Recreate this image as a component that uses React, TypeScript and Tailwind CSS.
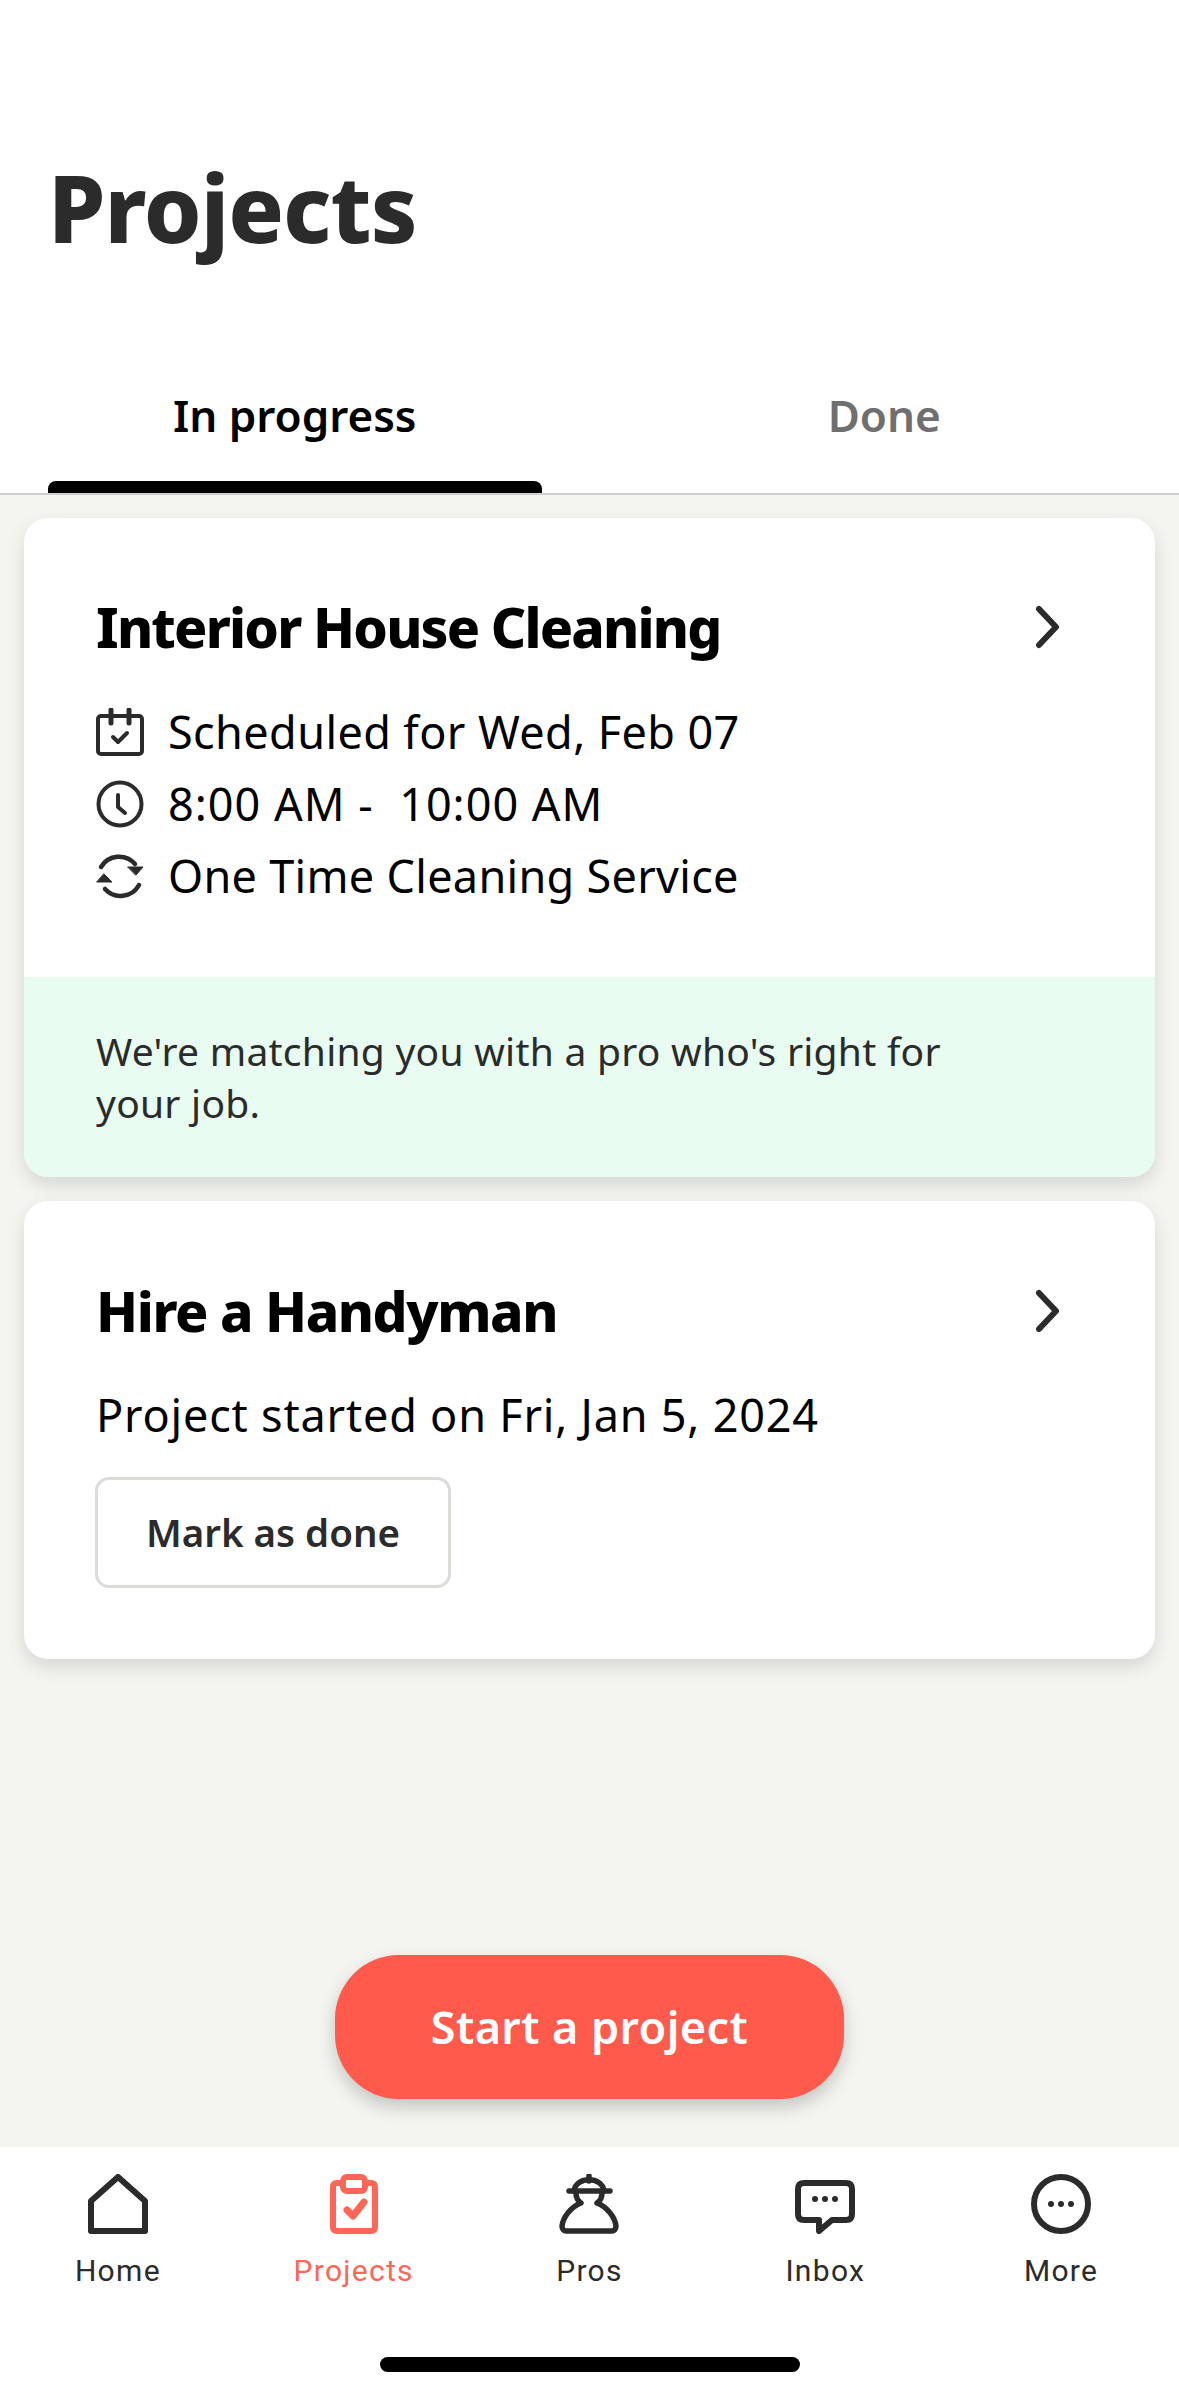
// Projects screen: tabs, project cards, start button and bottom navigation
const PLEX = "font-['Noto_Sans','Liberation_Sans',sans-serif]"

function Chevron() {
  return (
    <svg viewBox="0 0 30 44" className="h-[44px] w-[30px]" fill="none" stroke="#2b2b2b" strokeWidth="6" strokeLinecap="round" strokeLinejoin="round">
      <path d="M5 4 L22 22 L5 40" />
    </svg>
  )
}

function CalendarIcon() {
  return (
    <svg viewBox="0 0 48 48" className="h-[48px] w-[48px] shrink-0" fill="none" stroke="#2b2b2b" strokeWidth="4" strokeLinecap="round" strokeLinejoin="round">
      <rect x="2" y="8" width="44" height="38" rx="3" />
      <path d="M15 2 V15 M33 2 V15" strokeWidth="5" />
      <path d="M17 29 L22 34 L31 25" />
    </svg>
  )
}

function ClockIcon() {
  return (
    <svg viewBox="0 0 48 48" className="h-[48px] w-[48px] shrink-0" fill="none" stroke="#2b2b2b" strokeWidth="4" strokeLinecap="round" strokeLinejoin="round">
      <circle cx="24" cy="24" r="21.5" />
      <path d="M22 15 V27 L29 33" />
    </svg>
  )
}

function RepeatIcon() {
  return (
    <svg viewBox="0 0 48 48" className="h-[48px] w-[48px] shrink-0" fill="none" stroke="#2b2b2b" strokeWidth="4.5" strokeLinecap="round">
      <path d="M5 15 A21 21 0 0 1 39 12" />
      <path d="M43 33 A21 21 0 0 1 9 37" />
      <path d="M32 15 H47 L40 23 Z" fill="#2b2b2b" stroke="#2b2b2b" strokeWidth="1" strokeLinejoin="round" />
      <path d="M1 30 H16 L8 22 Z" fill="#2b2b2b" stroke="#2b2b2b" strokeWidth="1" strokeLinejoin="round" />
    </svg>
  )
}

function HomeIcon() {
  return (
    <svg viewBox="0 0 60 60" className="h-[60px] w-[60px]" fill="none" stroke="#2b2b2b" strokeWidth="6" strokeLinejoin="round">
      <path d="M30 3 L57 27 V57 H3 V27 Z" />
    </svg>
  )
}

function ProjectsIcon() {
  return (
    <svg viewBox="0 0 60 60" className="h-[60px] w-[60px]" fill="none" stroke="#ff6658" strokeWidth="6" strokeLinejoin="round" strokeLinecap="round">
      <path d="M17 9 H13 Q9 9 9 13 V53 Q9 57 13 57 H47 Q51 57 51 53 V13 Q51 9 47 9 H43" />
      <rect x="19" y="3" width="22" height="14" rx="4" />
      <path d="M23 36 L29 42 L40 28" strokeWidth="7" />
    </svg>
  )
}

function ProsIcon() {
  return (
    <svg viewBox="0 0 60 60" className="h-[60px] w-[60px]" fill="none" stroke="#2b2b2b" strokeWidth="5.5" strokeLinejoin="round" strokeLinecap="round">
      <path d="M10 17 H51" />
      <path d="M15 17 C17 2 43 2 45 17" />
      <path d="M30 2 V7" />
      <path d="M17 19 C17 24 19 27 22 29 C12 33 4 43 3 52 C3 55 5 57 7 57 H53 C55 57 57 55 57 52 C56 43 48 33 38 29 C41 27 43 24 43 19" />
    </svg>
  )
}

function InboxIcon() {
  return (
    <svg viewBox="0 0 60 60" className="h-[60px] w-[60px]" fill="none" stroke="#2b2b2b" strokeWidth="6" strokeLinejoin="round" strokeLinecap="round">
      <path d="M9 9 H51 Q57 9 57 15 V40 Q57 46 51 46 H37 L24 57 V46 H9 Q3 46 3 40 V15 Q3 9 9 9 Z" />
      <circle cx="20" cy="25" r="3" fill="#2b2b2b" stroke="none" />
      <circle cx="30" cy="25" r="3" fill="#2b2b2b" stroke="none" />
      <circle cx="40" cy="25" r="3" fill="#2b2b2b" stroke="none" />
    </svg>
  )
}

function MoreIcon() {
  return (
    <svg viewBox="0 0 60 60" className="h-[60px] w-[60px]" fill="none" stroke="#2b2b2b" strokeWidth="6">
      <circle cx="30" cy="30" r="27" />
      <circle cx="20" cy="30" r="3" fill="#2b2b2b" stroke="none" />
      <circle cx="30" cy="30" r="3" fill="#2b2b2b" stroke="none" />
      <circle cx="40" cy="30" r="3" fill="#2b2b2b" stroke="none" />
    </svg>
  )
}

const NAV_ITEMS = [
  { label: 'Home', icon: <HomeIcon /> },
  { label: 'Projects', icon: <ProjectsIcon />, active: true },
  { label: 'Pros', icon: <ProsIcon /> },
  { label: 'Inbox', icon: <InboxIcon /> },
  { label: 'More', icon: <MoreIcon /> },
]

export default function App() {
  return (
    <div className={`flex h-[2396px] w-[1179px] flex-col overflow-hidden bg-[#f4f4f1] ${PLEX}`}>
      {/* Header and tabs */}
      <header className="h-[495px] shrink-0 border-b-2 border-[#cfcfcd] bg-white">
        <h1 className="pl-[48px] pt-[148px] text-[92px] leading-[120px] font-extrabold tracking-[-1px] text-[#2b2b2b]">Projects</h1>
        <div className="mt-[117px] grid grid-cols-2">
          <div className="flex flex-col items-center px-[48px]">
            <span className="text-[44px] leading-[60px] font-semibold text-black">In progress</span>
            <div className="mt-[36px] h-[12px] w-full rounded-t-[8px] bg-black" />
          </div>
          <div className="flex flex-col items-center px-[48px]">
            <span className="text-[44px] leading-[60px] font-semibold text-[#6f6f6f]">Done</span>
          </div>
        </div>
      </header>

      {/* Project cards */}
      <main className="flex flex-1 flex-col gap-[24px] px-[24px] pt-[23px]">
        <section className="overflow-hidden rounded-[24px] bg-white shadow-[0_8px_18px_rgba(0,0,0,0.12)]">
          <div className="h-[459px] pl-[72px] pr-[91px] pt-[73px]">
            <div className="flex items-center justify-between">
              <h2 className="text-[55px] leading-[72px] font-extrabold tracking-[-1.8px] text-black">Interior House Cleaning</h2>
              <Chevron />
            </div>
            <div className="mt-[33px] flex flex-col text-[45px] leading-[72px] text-black">
              <div className="flex items-center gap-[24px] tracking-[0.4px]"><CalendarIcon />Scheduled for Wed, Feb 07</div>
              <div className="flex items-center gap-[24px] tracking-[1px]"><ClockIcon />8:00 AM -&nbsp; 10:00 AM</div>
              <div className="flex items-center gap-[24px] tracking-[0.3px]"><RepeatIcon />One Time Cleaning Service</div>
            </div>
          </div>
          <div className="h-[200px] bg-[#e8fcf1] px-[72px] pt-[48px] text-[39px] leading-[52px] tracking-[0.25px] text-[#2b2b2b]">
            <p className="w-[880px]">We're matching you with a pro who's right for your job.</p>
          </div>
        </section>

        <section className="h-[458px] rounded-[24px] bg-white pl-[72px] pr-[91px] pt-[74px] shadow-[0_8px_18px_rgba(0,0,0,0.12)]">
          <div className="flex items-center justify-between">
            <h2 className="text-[55px] leading-[72px] font-extrabold tracking-[-1.4px] text-black">Hire a Handyman</h2>
            <Chevron />
          </div>
          <p className="mt-[32px] text-[45px] leading-[72px] tracking-[0.8px] text-black">Project started on Fri, Jan 5, 2024</p>
          <button className="mt-[26px] -ml-[1px] flex h-[111px] w-[356px] items-center justify-center rounded-[14px] border-[3px] border-[#dddcd9] text-[38.5px] font-semibold text-[#2b2b2b]">
            Mark as done
          </button>
        </section>

        <div className="mt-auto mb-[48px] flex justify-center">
          <button className="h-[144px] w-[509px] rounded-[64px] bg-[#ff5a4b] text-[45px] font-semibold tracking-[0.4px] text-white shadow-[0_8px_18px_rgba(0,0,0,0.2)]">
            Start a project
          </button>
        </div>
      </main>

      {/* Bottom navigation */}
      <nav className="relative h-[249px] shrink-0 bg-white">
        <div className="grid grid-cols-5 pt-[27px]">
          {NAV_ITEMS.map(item => (
            <div key={item.label} className="flex flex-col items-center">
              {item.icon}
              <span className={`mt-[17px] font-['Roboto',sans-serif] text-[30px] leading-[40px] tracking-[1.3px] ${item.active ? 'text-[#ff6658]' : 'text-[#2b2b2b]'}`}>
                {item.label}
              </span>
            </div>
          ))}
        </div>
        <div className="absolute bottom-[24px] left-[380px] h-[15px] w-[420px] rounded-full bg-black" />
      </nav>
    </div>
  )
}
